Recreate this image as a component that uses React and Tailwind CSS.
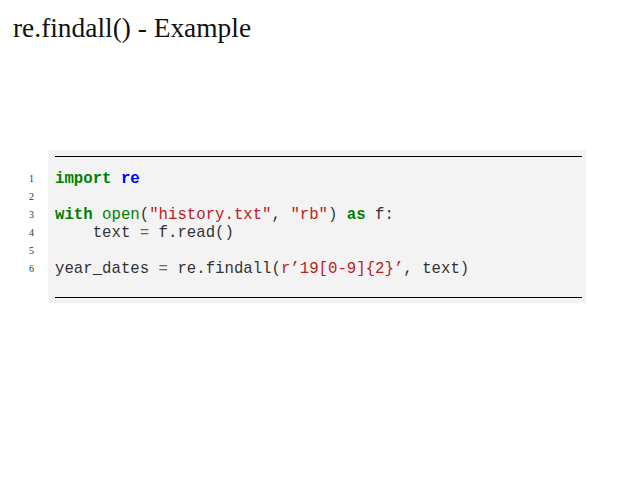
const LINES = [
  [['kw', 'import'], ['t', ' '], ['ns', 're']],
  [],
  [['kw', 'with'], ['t', ' '], ['bi', 'open'], ['t', '('], ['s', '"history.txt"'], ['t', ', '], ['s', '"rb"'], ['t', ') '], ['kw', 'as'], ['t', ' f:']],
  [['t', '    text '], ['op', '='], ['t', ' f.read()']],
  [],
  [['t', 'year_dates '], ['op', '='], ['t', ' re.findall('], ['s', 'r\u201919[0-9]{2}\u2019'], ['t', ', text)']],
]

const TOKEN_CLASS = {
  kw: 'text-[#008000] font-bold',
  ns: 'text-[#0000ff] font-bold',
  bi: 'text-[#008000]',
  s: 'text-[#ba2121]',
  op: 'text-[#666666]',
  t: 'text-[#333333]',
}

export default function App() {
  return (
    <div className="w-[638px] h-[479px] bg-white overflow-hidden">
      <h1 className="pl-[13px] pt-[10px] text-[27.4px] leading-[36px] text-[#111] font-['Liberation_Serif',serif]">
        re.findall() - Example
      </h1>

      <div className="flex mt-[104px]">
        {/* line numbers */}
        <div className="w-[48px] pt-[20px] flex flex-col">
          {LINES.map((_, i) => (
            <span
              key={i}
              className="h-[18px] leading-[18px] pl-[29px] text-[10px] text-[#333] font-['Liberation_Serif',serif]"
            >
              {i + 1}
            </span>
          ))}
        </div>

        {/* code block */}
        <div className="w-[538px] bg-[#f3f3f3] pt-[6px] pb-[5px] pl-[7px] pr-[4px]">
          <div className="border-t border-black" />
          <pre className="pt-[13px] pb-[19px] font-['Liberation_Mono',monospace] text-[15.7px] leading-[18px]">
            {LINES.map((tokens, i) => (
              <div key={i} className="h-[18px] whitespace-pre">
                {tokens.map(([k, v], j) => (
                  <span key={j} className={TOKEN_CLASS[k]}>{v}</span>
                ))}
              </div>
            ))}
          </pre>
          <div className="border-t border-black" />
        </div>
      </div>
    </div>
  )
}
